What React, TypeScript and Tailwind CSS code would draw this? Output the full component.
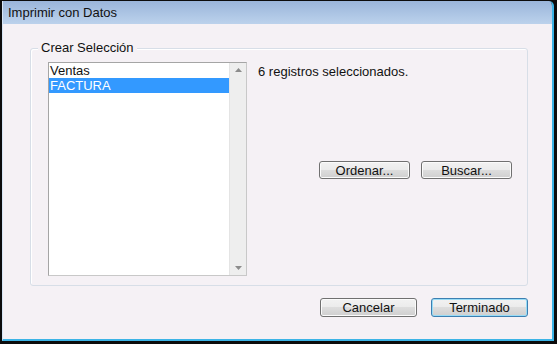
import React from "react";

const font = { fontFamily: '"Liberation Sans", Arial, sans-serif' };

function Btn({ label, w, h, def }: { label: string; w: string; h: string; def?: boolean }) {
  const base =
    "flex items-center justify-center rounded-[3px] border text-[13px] text-[#111] leading-none " +
    "bg-[linear-gradient(#f2f2f2_0%,#ebebeb_50%,#dddddd_50%,#cfcfcf_100%)] ";
  const cls = def
    ? base + "border-[#3c7fb1] shadow-[inset_0_0_0_1px_#98dcf6]"
    : base + "border-[#707070] shadow-[inset_0_0_0_1px_#fbfbfb]";
  return <div className={`${cls} ${w} ${h}`}>{label}</div>;
}

export default function App() {
  return (
    <div className="w-[557px] h-[344px] bg-[#0c0c0c] pl-[2px] pt-[1px] pr-[3px] pb-[3px] flex" style={font}>
      <div className="flex-1 flex flex-col border-l border-l-[#d6e5f5] border-r-2 border-b-2 border-r-[#3cb4e6] border-b-[#3cb4e6] rounded-tr-[5px] overflow-hidden">
        <div className="h-[23px] shrink-0 bg-gradient-to-b from-[#9ab5da] to-[#bcd2ec] flex items-center pl-[5px] text-[13px] text-[#111]">
          Imprimir con Datos
        </div>
        <div className="flex-1 bg-[#f5f1f5] pl-[27px] pt-[24px] flex flex-col">
          <div className="relative w-[498px] h-[238px] border border-[#d7dee7] rounded-[3px] shadow-[inset_1px_1px_0_#ffffff] flex pl-[17px] pt-[13px]">
            <div className="absolute left-[7px] top-[-9px] px-[3px] bg-[#f5f1f5] text-[13px] leading-[15px] text-[#111]">
              Crear Selección
            </div>
            <div className="w-[199px] h-[214px] border border-[#a5a5a5] border-r-[#c8c8c8] border-b-[#c8c8c8] bg-white flex">
              <div className="flex-1 flex flex-col text-[13px] text-[#111]">
                <div className="h-[15px] leading-[15px] pl-[1px]">Ventas</div>
                <div className="h-[15px] leading-[15px] pl-[1px] bg-[#3399ff] text-white">FACTURA</div>
              </div>
              <div className="w-[17px] bg-[#eeeeee] border-l border-[#e4e4e4] flex flex-col items-center justify-between py-[5px]">
                <svg width="7" height="4" viewBox="0 0 7 4">
                  <path d="M0 4 L3.5 0 L7 4 Z" fill="#8c8c8c" />
                </svg>
                <svg width="7" height="4" viewBox="0 0 7 4">
                  <path d="M0 0 L3.5 4 L7 0 Z" fill="#8c8c8c" />
                </svg>
              </div>
            </div>
            <div className="flex flex-col ml-[11px] pt-[2px]">
              <div className="text-[13px] leading-[15px] text-[#111]">6 registros seleccionados.</div>
              <div className="flex gap-[11px] pl-[61px] mt-[82px]">
                <Btn label="Ordenar..." w="w-[91px]" h="h-[18px]" />
                <Btn label="Buscar..." w="w-[91px]" h="h-[18px]" />
              </div>
            </div>
          </div>
          <div className="w-[498px] flex justify-end gap-[14px] mt-[12px]">
            <Btn label="Cancelar" w="w-[97px]" h="h-[19px]" />
            <Btn label="Terminado" w="w-[97px]" h="h-[19px]" def />
          </div>
        </div>
      </div>
    </div>
  );
}
